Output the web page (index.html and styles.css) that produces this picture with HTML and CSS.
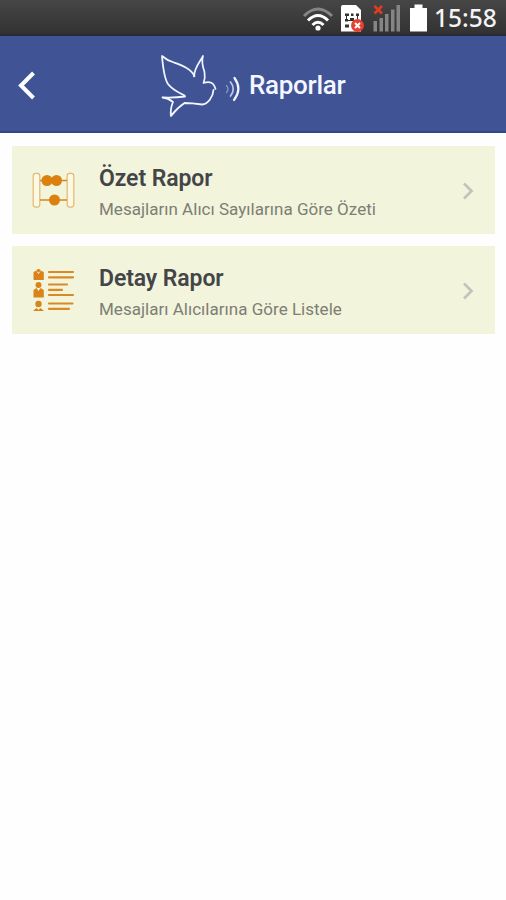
FILE: index.html
```html
<!DOCTYPE html>
<html lang="tr">
<head>
<meta charset="utf-8">
<title>Raporlar</title>
<link rel="stylesheet" href="styles.css">
</head>
<body>
<div class="status">
  <svg class="status-icons" viewBox="300 0 130 36" width="130" height="36">
    <g fill="none" stroke-linecap="butt">
      <path d="M304 16Q318 2 332 16" stroke="#858585" stroke-width="3"/>
      <path d="M308 20.5Q318 10.500 328 20.500M312.500 25Q318 19.500 323.500 25" stroke="#fff" stroke-width="3"/>
    </g>
    <circle cx="318" cy="28" r="2.600" fill="#fff"/>
    <path d="M343 5h13l5 5v21.500h-20V7q0-2 2-2z" fill="#fff"/>
    <path d="M345 13.500h4v2.500h-4zM351 13.500h2.500v2.500h-2.500zM356 13.500h3v2.500h-3zM345 19h3v2.500h-3zM350 18h4v3h-4zM345 24.500h4v3h-4zM346 16h1v3h-1zM357 16h1v3h-1zM348 20h2v1h-2z" fill="#333"/>
    <circle cx="357.500" cy="25.500" r="6.500" fill="#e8402f"/>
    <path d="M355 23l5 5M360 23l-5 5" stroke="#fff" stroke-width="2"/>
    <path d="M373.500 21h3.500v10.500h-3.500zM379.500 18h3.500v13.500h-3.500zM385 14h3.500v17.500H385zM391 9.500h3.500v22H391zM396.500 5h3.500v26.500h-3.500z" fill="#858585"/>
    <path d="M374.500 6l7.500 7.500M382 6l-7.500 7.500" stroke="#e33a20" stroke-width="2.600"/>
    <path d="M414.500 4.500h8V8h4.500v23.500h-17V8h4.500z" fill="#fff"/>
  </svg>
  <span class="clock">15:58</span>
</div>
<header class="header">
  <svg class="back" viewBox="0 0 20 30" width="20" height="30"><path d="M16.500 3L4 15.500 16.500 28" fill="none" stroke="#fff" stroke-width="4"/></svg>
  <svg class="bird" viewBox="158 50 86 72" width="86" height="72">
    <g fill="none" stroke="#f1f5ff" stroke-linejoin="round" stroke-linecap="round">
      <path d="M194.500 76C191 68.500 181 65 174 62.500Q167 60.500 162 56C163 68 164 78 168 84C173 90.500 179 92.500 184.500 95.500" stroke-width="1.800"/>
      <path d="M194 76.500C194.500 67 200 62 203 56Q201 62 204.500 72Q205.500 78 203.500 83Q213 79.500 215.500 89" stroke-width="1.700"/>
      <path d="M213.500 90C213 97 208 104 202 104.500Q192 103 184.500 103Q177 108 171 116Q170 109 173 102Q168 98 162.500 97.500Q175 98 185 96.500" stroke-width="1.800"/>
      <path d="M234.500 78Q242.500 89 234 100" stroke-width="2.200"/>
      <path d="M230.500 82Q236 89 230.500 96" stroke="#bdc9eb" stroke-width="1.700"/>
      <path d="M226.500 85.500Q229.500 89 226.500 92.500" stroke="#8396ca" stroke-width="1.300"/>
    </g>
  </svg>
  <h1 class="title">Raporlar</h1>
</header>
<main class="list">
  <a class="card">
    <svg class="icon" viewBox="32 169 44 42" width="44" height="42">
      <g fill="#fbf8e3" stroke="#e4b873" stroke-width="1.200"><rect x="33.200" y="173.300" width="6.600" height="33.800" rx="2.500"/><rect x="67.200" y="173.300" width="6.600" height="33.800" rx="2.500"/></g>
      <path d="M40 180.500h27M40 200h27" stroke="#d98718" stroke-width="1.700"/>
      <g fill="#da8110"><circle cx="47" cy="180.500" r="5.500"/><circle cx="56.500" cy="180.500" r="5.500"/><circle cx="54.500" cy="200" r="5.500"/></g>
    </svg>
    <div class="text"><h2 class="name">Özet Rapor</h2><p class="desc">Mesajların Alıcı Sayılarına Göre Özeti</p></div>
    <svg class="chevron" viewBox="0 0 14 20" width="14" height="20"><path d="M3 2.500l7.500 7.500L3 17.500" fill="none" stroke="#c3c3bd" stroke-width="2.700"/></svg>
  </a>
  <a class="card">
    <svg class="icon" viewBox="32 269 44 42" width="44" height="42">
      <path d="M49 272h24M49 277.300h24M49 284.500h18M49 289.800h13M49 295h24M49 303.500h23.500M49 308.800h20" stroke="#d98a22" stroke-width="2.200" stroke-linecap="round"/>
      <g fill="#da831a"><path d="M33.500 272l3-1.500 2 3.500 2-3.500 3.300 1.500v8H33.500zM33.500 290l3-2 2 3 2-3 3.300 2v7.500H33.500zM33 311l3.500-3 2 2 2-2 3.500 3z"/><circle cx="38.500" cy="285" r="3"/><circle cx="38.500" cy="304" r="3.200"/><circle cx="38.500" cy="271" r="2"/></g>
      <path d="M37 271.500l1.500 2 1.500-2" fill="none" stroke="#f4e7be" stroke-width="1"/>
    </svg>
    <div class="text"><h2 class="name">Detay Rapor</h2><p class="desc">Mesajları Alıcılarına Göre Listele</p></div>
    <svg class="chevron" viewBox="0 0 14 20" width="14" height="20"><path d="M3 2.500l7.500 7.500L3 17.500" fill="none" stroke="#c3c3bd" stroke-width="2.700"/></svg>
  </a>
</main>
</body>
</html>
```
FILE: styles.css
```css
* { box-sizing: border-box; }
body { margin: 0; min-height: 900px; background: #fefefe; font-family: Roboto, "Noto Sans", sans-serif; }
h1, h2, p { margin: 0; white-space: nowrap; }
svg { display: block; flex: none; }
.status { display: flex; align-items: center; height: 36px; padding-left: 300px; background: linear-gradient(#464646, #333 90%, #252a38); }
.clock { margin: 0 0 0 4px; color: #f4f4f4; font: 500 24.5px/36px "Noto Sans", sans-serif; }
.header { display: flex; align-items: center; height: 97px; padding-left: 17px; background: #405495; border-bottom: 2px solid #304783; }
.back { margin-top: 2px; }
.bird { margin-left: 121px; margin-top: 4px; }
.title { margin: 3px 0 0 5px; color: #f4f7ff; font-size: 26px; line-height: 32px; font-weight: 500; letter-spacing: -.3px; }
.list { display: flex; flex-direction: column; gap: 12px; padding: 13px 11px 0 12px; }
.card { display: flex; align-items: center; height: 88px; padding: 0 20px; background: #f2f4dc; }
.text { flex: 1; margin-left: 23px; padding-top: 5px; }
.name { color: #444548; font-size: 23px; line-height: 30px; font-weight: 600; letter-spacing: -.1px; }
.desc { margin-top: 3px; color: #7d7e74; font-size: 17px; line-height: 24px; font-weight: 400; letter-spacing: .02px; }
.chevron { margin-top: 2px; }
```
